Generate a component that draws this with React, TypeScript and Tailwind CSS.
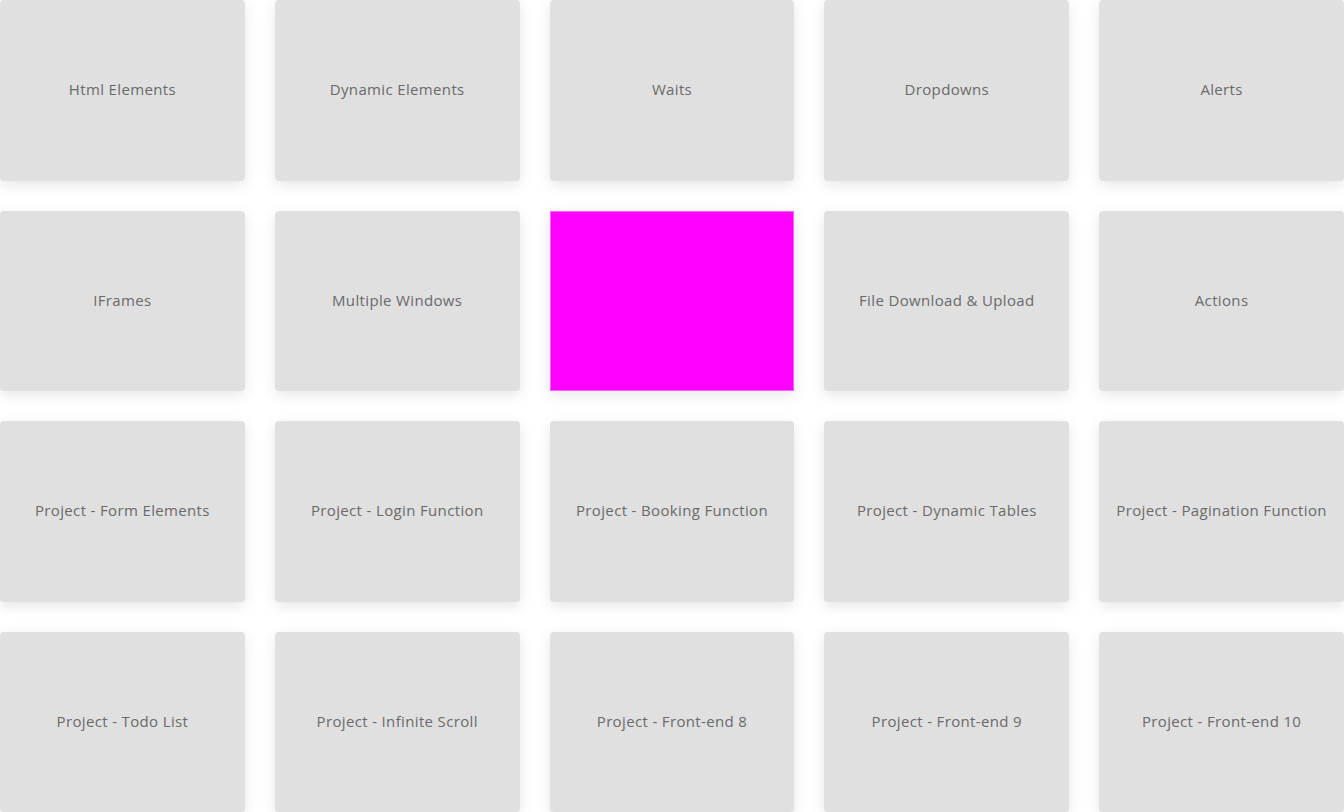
import React from "react";

const items: (string | null)[] = [
  "Html Elements",
  "Dynamic Elements",
  "Waits",
  "Dropdowns",
  "Alerts",
  "IFrames",
  "Multiple Windows",
  null,
  "File Download & Upload",
  "Actions",
  "Project - Form Elements",
  "Project - Login Function",
  "Project - Booking Function",
  "Project - Dynamic Tables",
  "Project - Pagination Function",
  "Project - Todo List",
  "Project - Infinite Scroll",
  "Project - Front-end 8",
  "Project - Front-end 9",
  "Project - Front-end 10",
];

export default function App() {
  return (
    <div className="w-[1344px] h-[812px] overflow-hidden bg-white">
      <div
        className="grid grid-cols-5 gap-x-[30px] gap-y-[30px] auto-rows-[180.5px]"
        style={{ fontFamily: '"Open Sans", "Liberation Sans", sans-serif' }}
      >
        {items.map((t, i) =>
          t === null ? (
            <div
              key={i}
              className="bg-[#ff00ff] border border-[#ff5cff] shadow-[0_4px_14px_rgba(0,0,0,0.10)]"
            />
          ) : (
            <div
              key={i}
              className="rounded-[4px] bg-[#e0e0e0] shadow-[0_4px_14px_rgba(0,0,0,0.10)] flex items-center justify-center text-center text-[15px] text-[#6a6a6a] tracking-[0.35px] pb-[2px]"
            >
              {t}
            </div>
          )
        )}
      </div>
    </div>
  );
}
